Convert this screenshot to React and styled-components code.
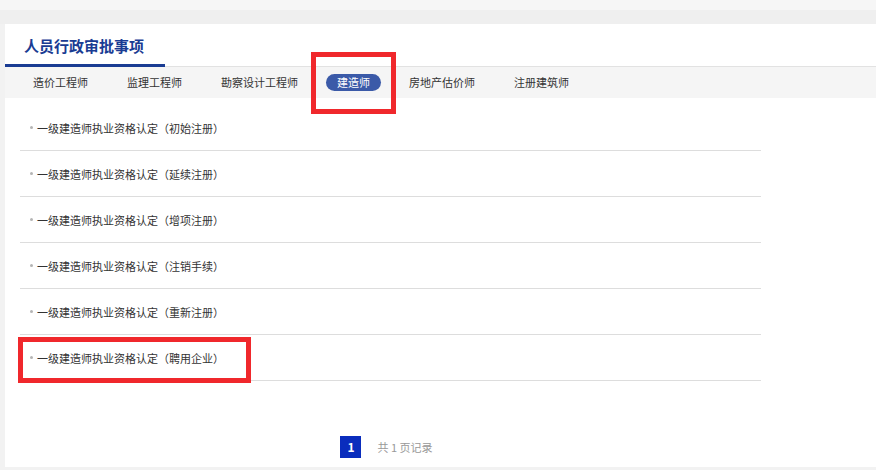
import React from "react";
import styled, { createGlobalStyle } from "styled-components";

const GlobalStyle = createGlobalStyle`
  html, body {
    margin: 0;
    padding: 0;
    background: #f2f2f2;
    font-family: "Noto Sans CJK SC", "Noto Sans", sans-serif;
  }
`;

const tabs = ["造价工程师", "监理工程师", "勘察设计工程师", "建造师", "房地产估价师", "注册建筑师"];

const items = [
  "一级建造师执业资格认定（初始注册）",
  "一级建造师执业资格认定（延续注册）",
  "一级建造师执业资格认定（增项注册）",
  "一级建造师执业资格认定（注销手续）",
  "一级建造师执业资格认定（重新注册）",
  "一级建造师执业资格认定（聘用企业）",
];

const App = () => {
  return (
    <>
      <GlobalStyle />
      <Page>
        <TopStrip />
        <Card>
          <Header>
            <Title>人员行政审批事项</Title>
          </Header>
          <TabBar>
            {tabs.map((tab) => (
              <Tab key={tab} active={tab === "建造师"}>
                {tab}
              </Tab>
            ))}
          </TabBar>
          <List>
            {items.map((item) => (
              <Item key={item}>
                <Bullet />
                {item}
              </Item>
            ))}
          </List>
          <Pager>
            <PageNum>1</PageNum>
            <PageInfo>共 1 页记录</PageInfo>
          </Pager>
        </Card>
        <Highlight style={{ left: 311, top: 52, width: 85, height: 62 }} />
        <Highlight style={{ left: 18, top: 337, width: 233, height: 46 }} />
      </Page>
    </>
  );
};

export default App;

const Page = styled.div`
  position: relative;
  width: 876px;
  height: 470px;
  overflow: hidden;
  background: #f2f2f2;
`;

const TopStrip = styled.div`
  height: 10px;
  background: #f6f6f6;
  border-bottom: 14px solid #efefef;
`;

const Card = styled.div`
  margin-left: 5px;
  height: 443px;
  background: #fff;
  display: flex;
  flex-direction: column;
`;

const Header = styled.div`
  height: 42px;
  border-bottom: 1px solid #e2e2e2;
  display: flex;
  align-items: flex-end;
`;

const Title = styled.div`
  width: 141px;
  padding: 0 0 7px 19px;
  margin-bottom: -1px;
  font-size: 15px;
  font-weight: bold;
  line-height: 22px;
  color: #1a3c93;
  border-bottom: 3px solid #1a3c93;
`;

const TabBar = styled.div`
  height: 31px;
  background: #f5f5f5;
  display: flex;
  align-items: center;
  gap: 17px;
  padding-left: 17px;
`;

const Tab = styled.div`
  padding: 0 11px;
  height: 17px;
  line-height: 17px;
  border-radius: 9px;
  font-size: 11px;
  color: ${(p) => (p.active ? "#fff" : "#333")};
  background: ${(p) => (p.active ? "#3b5aa8" : "transparent")};
`;

const List = styled.div`
  width: 741px;
  margin: 7px 0 0 15px;
`;

const Item = styled.div`
  height: 45px;
  border-bottom: 1px solid #dddddd;
  display: flex;
  align-items: center;
  padding-left: 10px;
  font-size: 11px;
  color: #333;
  white-space: pre;
`;

const Bullet = styled.span`
  width: 3px;
  height: 3px;
  border-radius: 50%;
  background: #b5b5b5;
  margin-right: 4px;
`;

const Pager = styled.div`
  width: 733px;
  margin: 55px 0 0 15px;
  padding-right: 8px;
  display: flex;
  justify-content: center;
  align-items: center;
  gap: 16px;
`;

const PageNum = styled.div`
  width: 21px;
  height: 22px;
  line-height: 22px;
  text-align: center;
  background: #0a2dbd;
  color: #fff;
  font-size: 12px;
  font-weight: bold;
`;

const PageInfo = styled.div`
  font-size: 11px;
  color: #999;
`;

const Highlight = styled.div`
  position: absolute;
  box-sizing: border-box;
  border: 5px solid #f0282c;
  pointer-events: none;
`;
